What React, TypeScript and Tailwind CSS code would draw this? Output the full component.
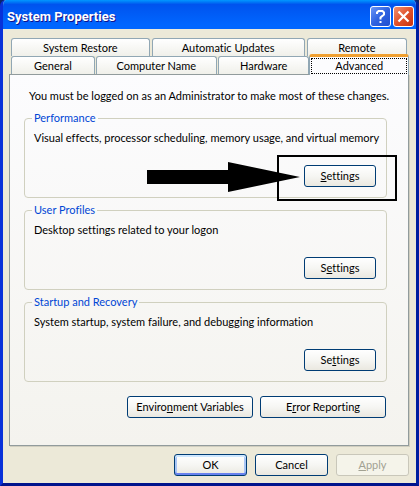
import { ReactNode } from 'react';
import clsx from 'clsx';

interface TabProps {
  className: string;
  children: ReactNode;
}

function Tab({ className, children }: TabProps) {
  return (
    <button
      type="button"
      role="tab"
      aria-selected={false}
      className={clsx(
        'h-[18px] min-w-0 whitespace-nowrap rounded-t-[3px] border border-b-0 border-[#91a7b4] bg-linear-to-b from-white to-[#f0f0ea] leading-4',
        className
      )}
    >
      {children}
    </button>
  );
}

interface XpButtonProps {
  className?: string;
  isDefault?: boolean;
  disabled?: boolean;
  children: ReactNode;
}

function XpButton({ className, isDefault, disabled, children }: XpButtonProps) {
  return (
    <button
      type="button"
      disabled={disabled}
      className={clsx(
        'h-[22px] whitespace-nowrap rounded-[3px] border leading-4',
        disabled
          ? 'border-[#c9c7ba] bg-[#f5f4ea] text-[#a1a192]'
          : 'border-[#003c74] bg-linear-to-b from-white via-[#f6f6f3] to-[#eae8e0] text-black',
        isDefault && 'shadow-[inset_0_2px_0_#cee7ff,inset_0_-2px_0_#6982ee,inset_2px_0_0_#a9c6f5,inset_-2px_0_0_#a9c6f5]',
        className
      )}
    >
      {children}
    </button>
  );
}

interface GroupProps {
  title: string;
  description: string;
  button: ReactNode;
  children?: ReactNode;
}

function Group({ title, description, button, children }: GroupProps) {
  return (
    <fieldset className="relative min-w-0 rounded-[4px] border border-[#d0d0bf] pr-[10px] pb-[10px] pl-[9px]">
      <legend className="-ml-[2px] px-[2px] leading-4 text-[#0046d5]">{title}</legend>
      <p className="whitespace-nowrap pt-1 leading-4">{description}</p>
      <div className="mt-[19px] flex justify-end">
        <XpButton className="w-[72px]">{button}</XpButton>
      </div>
      {children}
    </fieldset>
  );
}

export default function App() {
  return (
    <div className="bg-[#0a246a] font-['Lato','Liberation_Sans',Arial,sans-serif] text-[11px] text-black [font-variant-ligatures:none]">
      <div className="overflow-hidden rounded-t-[6px] border-r-3 border-b-3 border-l-3 border-t-0 border-[#0831d9] border-r-[#001ea0] border-b-[#00138c] bg-[#ece9d8]">
        {/* Title bar */}
        <header className="-mx-[3px] flex h-[29px] items-center bg-linear-to-b from-[#0997ff] from-0% via-[#0053ee] via-15% to-[#0066ff] to-85% pt-1 pr-[5px] pl-[7px]">
          <h1 className="flex-1 font-['Roboto',sans-serif] text-[13px] leading-4 font-bold text-white [text-shadow:1px_1px_0_#0f1089]">
            System Properties
          </h1>
          <div className="flex gap-[2px]">
            <button
              type="button"
              aria-label="Help"
              className="flex size-[21px] items-center justify-center rounded-[3px] border border-white bg-linear-to-br from-[#6b95f5] via-[#2f62e0] to-[#2050d0]"
            >
              <svg width="13" height="15" viewBox="0 0 13 15" fill="none" stroke="white" strokeWidth="2">
                <path d="M3 5V3.5L4.5 2H8.5L10 3.5V5.5L6.5 8.5V10.5" />
                <path d="M6.5 12V14" />
              </svg>
            </button>
            <button
              type="button"
              aria-label="Close"
              className="flex size-[21px] items-center justify-center rounded-[3px] border border-white bg-linear-to-br from-[#f0906f] via-[#e0522c] to-[#c8320c]"
            >
              <svg width="13" height="13" viewBox="0 0 13 13" stroke="white" strokeWidth="2.2">
                <path d="M1.5 1.5L11.5 11.5M11.5 1.5L1.5 11.5" />
              </svg>
            </button>
          </div>
        </header>

        <main className="pt-[9px] pr-[7px] pb-[7px] pl-[6px]">
          {/* Tabs */}
          <div role="tablist" aria-label="System Properties">
            <div className="flex gap-[2px] pr-[2px] pl-[2px]">
              <Tab className="flex-[139]">System Restore</Tab>
              <Tab className="flex-[154]">Automatic Updates</Tab>
              <Tab className="flex-[100]">Remote</Tab>
            </div>
            <div className="flex pl-[2px]">
              <Tab className="mr-px flex-[84]">General</Tab>
              <Tab className="mr-px flex-[122]">Computer Name</Tab>
              <Tab className="flex-[92]">Hardware</Tab>
              <button
                type="button"
                role="tab"
                aria-selected
                className="z-10 -mt-[2px] -mb-px h-[21px] flex-[98] rounded-t-[3px] border-x border-t-3 border-[#91a7b4] border-t-[#f0a030] bg-[#fcfcfe] px-px"
              >
                <span className="block border border-dotted border-black leading-[14px]">Advanced</span>
              </button>
            </div>
          </div>

          {/* Advanced panel */}
          <section className="border border-[#919b9c] bg-linear-to-b from-[#fcfcfe] to-[#f4f3ee] pt-[13px] pr-[21px] pb-[27px] pl-[14px] shadow-[1px_1px_0_#d0cebf]">
            <p className="mb-[6px] whitespace-nowrap pl-[5px] leading-4">
              You must be logged on as an Administrator to make most of these changes.
            </p>
            <div className="flex flex-col gap-1">
              <Group
                title="Performance"
                description="Visual effects, processor scheduling, memory usage, and virtual memory"
                button={<><u>S</u>ettings</>}
              >
                {/* Callout over the Settings button */}
                <svg
                  className="pointer-events-none absolute -right-[11px] -bottom-[6px]"
                  width="250"
                  height="48"
                  viewBox="0 0 250 48"
                >
                  <path d="M0 15H81V7L153 22L81 37V29H0Z" />
                  <rect x="131" y="1" width="118" height="44" fill="none" stroke="black" strokeWidth="2" />
                </svg>
              </Group>
              <Group
                title="User Profiles"
                description="Desktop settings related to your logon"
                button={<>S<u>e</u>ttings</>}
              />
              <Group
                title="Startup and Recovery"
                description="System startup, system failure, and debugging information"
                button={<>Se<u>t</u>tings</>}
              />
            </div>
            <div className="mt-[14px] flex justify-end gap-[7px] pr-px">
              <XpButton className="w-[126px]">Enviro<u>n</u>ment Variables</XpButton>
              <XpButton className="w-[126px]">E<u>r</u>ror Reporting</XpButton>
            </div>
          </section>

          <footer className="mt-2 flex justify-end gap-2">
            <XpButton className="w-[73px]" isDefault>OK</XpButton>
            <XpButton className="w-[73px]">Cancel</XpButton>
            <XpButton className="w-[73px]" disabled><u>A</u>pply</XpButton>
          </footer>
        </main>
      </div>
    </div>
  );
}
